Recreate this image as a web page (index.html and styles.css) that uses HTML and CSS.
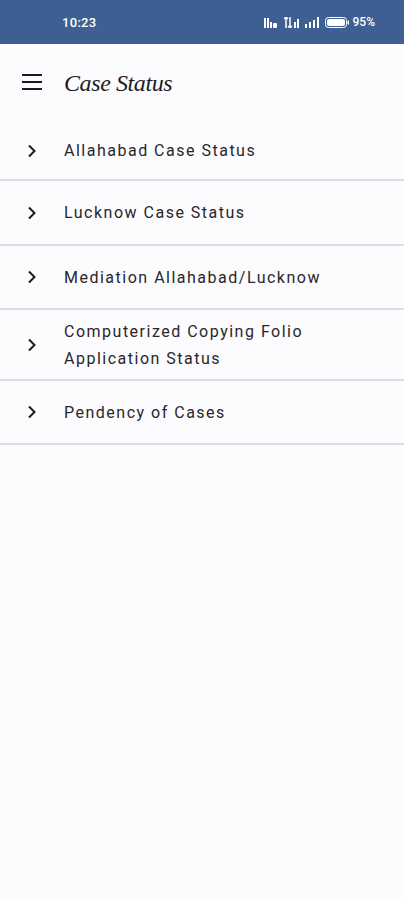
FILE: index.html
```html
<!DOCTYPE html>
<html lang="en">
<head>
    <meta charset="UTF-8">
    <meta name="viewport" content="width=device-width, initial-scale=1.0">
    <title>Case Status</title>
    <link rel="stylesheet" href="styles.css">
</head>
<body>
    <!-- Status bar -->
    <div class="status-bar">
        <span class="time">10:23</span>
        <div class="status-icons">
            <svg width="14" height="11" viewBox="0 0 14 11">
                <rect x="0" y="1" width="2" height="10" fill="#fff"/>
                <rect x="3" y="1" width="2" height="10" fill="#fff"/>
                <rect x="6" y="5" width="2" height="6" fill="#fff"/>
                <rect x="9" y="6" width="4" height="5" rx="1" fill="#fff"/>
            </svg>
            <svg width="15" height="11" viewBox="0 0 15 11">
                <path d="M2 0 L2 11 M0 2 L2 0 L4 2" stroke="#fff" stroke-width="1.5" fill="none"/>
                <path d="M6 11 L6 0 M4 9 L6 11 L8 9" stroke="#fff" stroke-width="1.5" fill="none"/>
                <rect x="10" y="5" width="2" height="6" fill="#fff"/>
                <rect x="13" y="2" width="2" height="9" fill="#fff"/>
            </svg>
            <svg width="14" height="11" viewBox="0 0 14 11">
                <rect x="0" y="7" width="2" height="4" fill="#fff"/>
                <rect x="4" y="5" width="2" height="6" fill="#fff"/>
                <rect x="8" y="3" width="2" height="8" fill="#fff"/>
                <rect x="12" y="0" width="2" height="11" fill="#fff"/>
            </svg>
            <svg width="24" height="11" viewBox="0 0 24 11">
                <rect x="0.5" y="0.5" width="21" height="10" rx="3" fill="none" stroke="#fff"/>
                <rect x="2" y="2" width="18" height="7" rx="2" fill="#fff"/>
                <rect x="22.5" y="3.5" width="1.5" height="4" rx="0.5" fill="#fff"/>
            </svg>
            <span class="battery">95%</span>
        </div>
    </div>

    <!-- App bar -->
    <header class="app-bar">
        <svg class="menu-icon" width="20" height="16" viewBox="0 0 20 16">
            <rect x="0" y="0" width="20" height="2" fill="#1c1b1f"/>
            <rect x="0" y="7" width="20" height="2" fill="#1c1b1f"/>
            <rect x="0" y="14" width="20" height="2" fill="#1c1b1f"/>
        </svg>
        <h1 class="title">Case Status</h1>
    </header>

    <!-- Menu list -->
    <ul class="case-list">
        <li class="case-item first">
            <span class="chevron">
                <svg width="10" height="14" viewBox="0 0 10 14"><path d="M2 1.5 L7.5 7 L2 12.5" stroke="#1c1b1f" stroke-width="2" fill="none"/></svg>
            </span>
            <span class="case-label">Allahabad Case Status</span>
        </li>
        <li class="case-item second">
            <span class="chevron">
                <svg width="10" height="14" viewBox="0 0 10 14"><path d="M2 1.5 L7.5 7 L2 12.5" stroke="#1c1b1f" stroke-width="2" fill="none"/></svg>
            </span>
            <span class="case-label">Lucknow Case Status</span>
        </li>
        <li class="case-item">
            <span class="chevron">
                <svg width="10" height="14" viewBox="0 0 10 14"><path d="M2 1.5 L7.5 7 L2 12.5" stroke="#1c1b1f" stroke-width="2" fill="none"/></svg>
            </span>
            <span class="case-label">Mediation Allahabad/Lucknow</span>
        </li>
        <li class="case-item two-line">
            <span class="chevron">
                <svg width="10" height="14" viewBox="0 0 10 14"><path d="M2 1.5 L7.5 7 L2 12.5" stroke="#1c1b1f" stroke-width="2" fill="none"/></svg>
            </span>
            <span class="case-label">Computerized Copying Folio<br>Application Status</span>
        </li>
        <li class="case-item">
            <span class="chevron">
                <svg width="10" height="14" viewBox="0 0 10 14"><path d="M2 1.5 L7.5 7 L2 12.5" stroke="#1c1b1f" stroke-width="2" fill="none"/></svg>
            </span>
            <span class="case-label">Pendency of Cases</span>
        </li>
    </ul>
</body>
</html>
```

FILE: styles.css
```css
body {
    font-family: Roboto, "Noto Sans", sans-serif;
    background-color: #fcfbfe;
    color: #1c1b1f;
    margin: 0;
    padding: 0;
}

.status-bar {
    height: 44px;
    background-color: #3e5f91;
    color: white;
    display: flex;
    align-items: center;
    justify-content: space-between;
    padding: 0 29px 0 62px;
    box-sizing: border-box;
}

.time {
    font-size: 13px;
    font-weight: 500;
    letter-spacing: 0.3px;
}

.status-icons {
    display: flex;
    align-items: center;
    gap: 6px;
}

.battery {
    font-size: 12px;
    font-weight: 500;
    margin-left: -2px;
}

.app-bar {
    height: 78px;
    display: flex;
    align-items: center;
    padding: 0 0 0 22px;
    box-sizing: border-box;
}

.menu-icon {
    margin-right: 22px;
    margin-bottom: 3px;
}

.title {
    margin: 0;
    font-family: "Liberation Serif", serif;
    font-style: italic;
    font-weight: normal;
    font-size: 24px;
    letter-spacing: -0.4px;
}

.case-list {
    list-style: none;
    margin: 0;
    padding: 0;
}

.case-item {
    display: flex;
    align-items: center;
    height: 64px;
    box-sizing: border-box;
    border-bottom: 2px solid #dedde2;
}

.case-item.first {
    height: 59px;
}

.case-item.second {
    height: 65px;
}

.case-item.two-line {
    height: 71px;
}

.chevron {
    width: 64px;
    display: flex;
    padding-left: 27px;
    box-sizing: border-box;
}

.case-label {
    font-size: 16px;
    letter-spacing: 1.5px;
    line-height: 27px;
    color: #28272b;
}
```
